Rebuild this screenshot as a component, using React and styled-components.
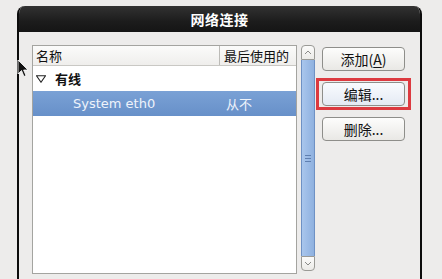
import React from "react";
import styled, { createGlobalStyle } from "styled-components";

const Global = createGlobalStyle`
  html, body { margin: 0; padding: 0; background: #edeceb; overflow: hidden; }
  body { font-family: "DejaVu Sans", "Noto Sans CJK SC", sans-serif; }
`;

const Page = styled.div`
  position: relative;
  width: 442px;
  height: 279px;
  padding: 6px 20px 0 17px;
  box-sizing: border-box;
  overflow: hidden;
`;

const Window = styled.div`
  width: 405px;
  height: 273px;
  display: flex;
  flex-direction: column;
  border-left: 2px solid #0c0c0c;
  border-right: 2px solid #0c0c0c;
  border-radius: 8px 8px 0 0;
  box-sizing: border-box;
  background: #edeceb;
  overflow: hidden;
`;

const TitleBar = styled.div`
  height: 26px;
  flex: none;
  background: linear-gradient(#323232, #1c1c1c 60%, #151515);
  color: #fff;
  font-family: "Noto Sans CJK SC", sans-serif;
  font-weight: 700;
  font-size: 14px;
  display: flex;
  align-items: center;
  justify-content: center;
  letter-spacing: 0.5px;
`;

const Body = styled.div`
  display: flex;
  padding: 13px 0 0 13px;
  align-items: flex-start;
`;

const ListBox = styled.div`
  width: 265px;
  height: 229px;
  flex: none;
  box-sizing: border-box;
  border: 1px solid #a4a4a0;
  background: #fff;
  display: flex;
  flex-direction: column;
`;

const Header = styled.div`
  display: flex;
  height: 19px;
  border-bottom: 1px solid #c9c8c4;
  background: linear-gradient(#fbfbfa, #efeeec);
  font-family: "Noto Sans CJK SC", sans-serif;
  font-size: 13px;
  color: #111;
  align-items: center;
`;

const HeaderCell = styled.div`
  box-sizing: border-box;
  padding-left: ${(p) => p.$pad}px;
  width: ${(p) => (p.$w ? `${p.$w}px` : "auto")};
  flex: ${(p) => (p.$w ? "none" : "1")};
  height: 100%;
  display: flex;
  align-items: center;
  border-left: ${(p) => (p.$sep ? "1px solid #bcbbb7" : "none")};
`;

const Row = styled.div`
  display: flex;
  align-items: center;
  height: 25px;
  background: ${(p) => (p.$selected ? "linear-gradient(#7aa1d5, #6790c9)" : "transparent")};
  color: ${(p) => (p.$selected ? "#eef3fb" : "#111")};
  font-size: 13px;
`;

const Cell = styled.div`
  box-sizing: border-box;
  width: ${(p) => (p.$w ? `${p.$w}px` : "auto")};
  flex: ${(p) => (p.$w ? "none" : "1")};
  padding-left: ${(p) => p.$pad || 0}px;
  font-family: ${(p) => (p.$cjk ? '"Noto Sans CJK SC", sans-serif' : '"DejaVu Sans", "Noto Sans CJK SC", sans-serif')};
  font-weight: ${(p) => (p.$bold ? 700 : 400)};
  display: flex;
  align-items: center;
  white-space: nowrap;
`;

const Expander = styled.svg`
  width: 10px;
  height: 8px;
`;

const ScrollBar = styled.div`
  margin-left: 4px;
  width: 14px;
  height: 226px;
  flex: none;
  display: flex;
  flex-direction: column;
`;

const ArrowButton = styled.div`
  height: 15px;
  flex: none;
  box-sizing: border-box;
  border: 1px solid #9a9a96;
  border-radius: ${(p) => (p.$top ? "4px 4px 0 0" : "0 0 4px 4px")};
  background: linear-gradient(#fbfbfa, #ecebe8);
  display: flex;
  align-items: center;
  justify-content: center;
`;

const Thumb = styled.div`
  flex: 1;
  box-sizing: border-box;
  border: 1px solid #6e91c4;
  border-top: none;
  border-bottom: none;
  background: linear-gradient(90deg, #a9c6ec, #9bbbe6 50%, #8fb1df);
  display: flex;
  align-items: center;
  justify-content: center;
`;

const Buttons = styled.div`
  margin-left: 7px;
  display: flex;
  flex-direction: column;
  gap: 11px;
  padding-top: 2px;
`;

const Highlight = styled.div`
  position: relative;
  &::after {
    content: "";
    position: absolute;
    left: -6px;
    right: -6px;
    top: -4px;
    bottom: -4px;
    border: 3px solid #dc3a40;
  }
`;

const Button = styled.div`
  width: 83px;
  height: 24px;
  box-sizing: border-box;
  border: 1px solid #8e8e8a;
  border-radius: 4px;
  background: ${(p) => (p.$focus ? "linear-gradient(#f9fbfe, #e4eaf3)" : "linear-gradient(#fdfdfc, #e9e8e5)")};
  font-family: "Noto Sans CJK SC", sans-serif;
  font-size: 14px;
  color: #111;
  display: flex;
  align-items: center;
  justify-content: center;
  & u { text-decoration: underline; text-underline-offset: 2px; }
`;

const Cursor = styled.svg`
  position: absolute;
  left: 17px;
  top: 59px;
  width: 12px;
  height: 19px;
`;

export default function App() {
  return (
    <Page>
      <Global />
      <Window>
        <TitleBar>网络连接</TitleBar>
        <Body>
          <ListBox>
            <Header>
              <HeaderCell $w={186} $pad={3}>名称</HeaderCell>
              <HeaderCell $sep $pad={4}>最后使用的</HeaderCell>
            </Header>
            <Row>
              <Cell $w={22} $pad={3}>
                <Expander viewBox="0 0 10 8">
                  <path d="M0.5 0.8 L9.5 0.8 L5 7.2 Z" fill="none" stroke="#222" strokeWidth="1.1" />
                </Expander>
              </Cell>
              <Cell $cjk $bold>有线</Cell>
            </Row>
            <Row $selected>
              <Cell $w={187} $pad={40}>System eth0</Cell>
              <Cell $cjk $pad={6}>从不</Cell>
            </Row>
          </ListBox>
          <ScrollBar>
            <ArrowButton $top>
              <svg width="8" height="5" viewBox="0 0 8 5">
                <path d="M1 4 L4 1 L7 4" fill="none" stroke="#8a8a88" strokeWidth="1" />
              </svg>
            </ArrowButton>
            <Thumb>
              <svg width="6" height="9" viewBox="0 0 6 9">
                <path d="M0 1.5 H6 M0 4.5 H6 M0 7.5 H6" stroke="#5f7fb0" strokeWidth="1" />
              </svg>
            </Thumb>
            <ArrowButton>
              <svg width="8" height="5" viewBox="0 0 8 5">
                <path d="M1 1 L4 4 L7 1" fill="none" stroke="#8a8a88" strokeWidth="1" />
              </svg>
            </ArrowButton>
          </ScrollBar>
          <Buttons>
            <Button>添加(<u>A</u>)</Button>
            <Highlight>
              <Button $focus>编辑...</Button>
            </Highlight>
            <Button>删除...</Button>
          </Buttons>
        </Body>
      </Window>
      <Cursor viewBox="0 0 12 19">
        <path d="M1 1 L1 15 L4.5 11.5 L7 17.5 L9 16.6 L6.6 11 L11 11 Z" fill="#111" stroke="#fff" strokeWidth="0.8" />
      </Cursor>
    </Page>
  );
}
